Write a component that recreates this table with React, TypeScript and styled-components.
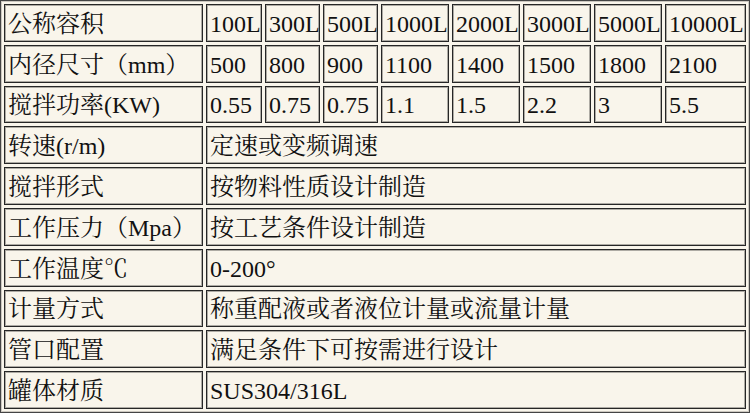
import React from 'react';
import styled, { createGlobalStyle } from 'styled-components';

const GlobalStyle = createGlobalStyle`
  html, body {
    margin: 0;
    padding: 0;
    background: #f9f5eb;
  }
`;

const widths = [199, 56, 55, 55, 68, 68, 68, 68, 81];

const volumes = ['100L', '300L', '500L', '1000L', '2000L', '3000L', '5000L', '10000L'];
const diameters = ['500', '800', '900', '1100', '1400', '1500', '1800', '2100'];
const powers = ['0.55', '0.75', '0.75', '1.1', '1.5', '2.2', '3', '5.5'];

const specs = [
  { label: '转速(r/m)', value: '定速或变频调速' },
  { label: '搅拌形式', value: '按物料性质设计制造' },
  { label: '工作压力（Mpa）', value: '按工艺条件设计制造' },
  { label: '工作温度℃', value: '0-200°' },
  { label: '计量方式', value: '称重配液或者液位计量或流量计量' },
  { label: '管口配置', value: '满足条件下可按需进行设计' },
  { label: '罐体材质', value: 'SUS304/316L' },
];

export default function App() {
  return (
    <>
      <GlobalStyle />
      <SpecTable>
        <tbody>
          <Row>
            <Cell $width={widths[0]}>公称容积</Cell>
            {volumes.map((v, i) => (
              <Cell key={v} $width={widths[i + 1]}>
                {v}
              </Cell>
            ))}
          </Row>
          <Row>
            <Cell>内径尺寸（mm）</Cell>
            {diameters.map((d, i) => (
              <Cell key={i}>{d}</Cell>
            ))}
          </Row>
          <Row>
            <Cell>搅拌功率(KW)</Cell>
            {powers.map((p, i) => (
              <Cell key={i}>{p}</Cell>
            ))}
          </Row>
          {specs.map((s) => (
            <Row key={s.label}>
              <Cell>{s.label}</Cell>
              <Cell colSpan={8}>{s.value}</Cell>
            </Row>
          ))}
        </tbody>
      </SpecTable>
    </>
  );
}

const SpecTable = styled.table`
  width: 750px;
  height: 413px;
  table-layout: fixed;
  border-collapse: separate;
  border-spacing: 3px;
  border: 1px solid #444;
  box-shadow: inset 0 0 0 1px rgba(0, 0, 0, 0.18);
  background: #f9f5eb;
  font-family: 'Liberation Serif', 'Noto Serif CJK SC', 'Noto Sans CJK SC', serif;
  font-size: 24px;
  color: #111;
`;

const Row = styled.tr`
  height: 37px;
`;

const Cell = styled.td<{ $width?: number }>`
  box-sizing: border-box;
  ${({ $width }) => ($width ? `width: ${$width}px;` : '')}
  padding: 2px 0 0 3px;
  border: 1px solid #262626;
  box-shadow: inset 0 0 0 1px rgba(0, 0, 0, 0.3);
  line-height: 30px;
  white-space: nowrap;
  vertical-align: middle;
  overflow: visible;
`;
